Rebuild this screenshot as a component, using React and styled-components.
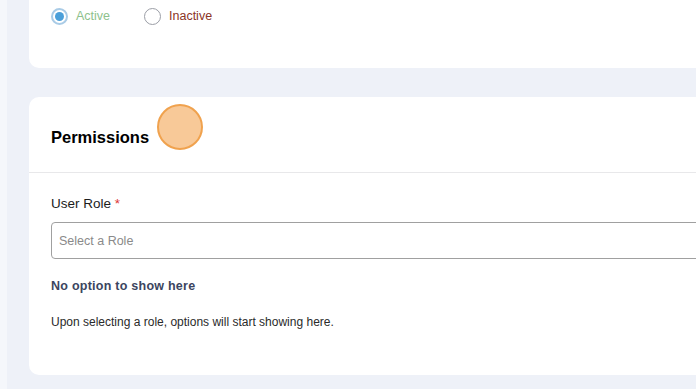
import styled, { createGlobalStyle } from 'styled-components';

const GlobalStyle = createGlobalStyle`
  html, body {
    margin: 0;
    padding: 0;
    background: #eef1f8;
    overflow: hidden;
  }
  body {
    font-family: 'Liberation Sans', Arial, sans-serif;
  }
`;

const Page = styled.div`
  display: flex;
  width: 696px;
  height: 389px;
  overflow: hidden;
`;

const SideEdge = styled.div`
  width: 7px;
  flex-shrink: 0;
  background: #f5f7fb;
`;

const Main = styled.main`
  flex: 1;
  padding-left: 22px;
  display: flex;
  flex-direction: column;
  gap: 29px;
`;

const Card = styled.section`
  position: relative;
  width: 720px;
  background: #fff;
  border-radius: ${({ $cut }) => ($cut ? '0 0 10px 10px' : '10px')};
`;

const StatusRow = styled.div`
  display: flex;
  align-items: flex-start;
  padding: 7px 22px 0;
  height: 61px;
`;

const RadioOption = styled.label`
  display: flex;
  align-items: center;
  gap: 8px;
  width: 93px;
  font-size: 12.5px;
  color: ${({ $color }) => $color};
  height: 18px;
`;

const RadioCircle = styled.span`
  box-sizing: border-box;
  width: 17px;
  height: 17px;
  border-radius: 50%;
  border: ${({ $checked }) => ($checked ? '2px solid #a9cbe6' : '1.5px solid #9b9ea6')};
  display: flex;
  align-items: center;
  justify-content: center;

  &::after {
    content: '';
    display: ${({ $checked }) => ($checked ? 'block' : 'none')};
    width: 9px;
    height: 9px;
    border-radius: 50%;
    background: #4b9fd9;
  }
`;

const CardHeader = styled.header`
  height: 75px;
  display: flex;
  align-items: center;
  padding: 0 22px;
  border-bottom: 1px solid #e8e8ea;
`;

const Title = styled.h2`
  margin: 0;
  margin-top: 5px;
  font-size: 16.5px;
  font-weight: 700;
  color: #000;
`;

const ClickMarker = styled.span`
  position: absolute;
  left: 128px;
  top: 7px;
  width: 46px;
  height: 46px;
  box-sizing: border-box;
  border-radius: 50%;
  background: #f8c998;
  border: 2px solid #f0a24e;
`;

const CardBody = styled.div`
  padding: 23px 22px 0;
  height: 179px;
`;

const Label = styled.div`
  font-size: 13.5px;
  color: #1c1c1c;

  span {
    color: #d33;
  }
`;

const Select = styled.div`
  box-sizing: border-box;
  margin-top: 11px;
  height: 37px;
  border: 1px solid #a0a0a0;
  border-radius: 4px;
  display: flex;
  align-items: center;
  padding: 0 7px;
  font-size: 12.5px;
  color: #8a8a8a;
`;

const EmptyTitle = styled.div`
  margin-top: 20px;
  font-size: 12.5px;
  font-weight: 700;
  color: #3b4560;
  letter-spacing: 0.25px;
`;

const EmptyText = styled.p`
  margin: 22px 0 0;
  font-size: 12px;
  color: #2a2a2a;
`;

const App = () => (
  <Page>
    <GlobalStyle />
    <SideEdge />
    <Main>
      <Card $cut>
        <StatusRow>
          <RadioOption $color='#8dc18c'>
            <RadioCircle $checked />
            Active
          </RadioOption>
          <RadioOption $color='#8b3526'>
            <RadioCircle />
            Inactive
          </RadioOption>
        </StatusRow>
      </Card>
      <Card>
        <CardHeader>
          <Title>Permissions</Title>
        </CardHeader>
        <ClickMarker />
        <CardBody>
          <Label>
            User Role <span>*</span>
          </Label>
          <Select>Select a Role</Select>
          <EmptyTitle>No option to show here</EmptyTitle>
          <EmptyText>
            Upon selecting a role, options will start showing here.
          </EmptyText>
        </CardBody>
      </Card>
    </Main>
  </Page>
);

export default App;
